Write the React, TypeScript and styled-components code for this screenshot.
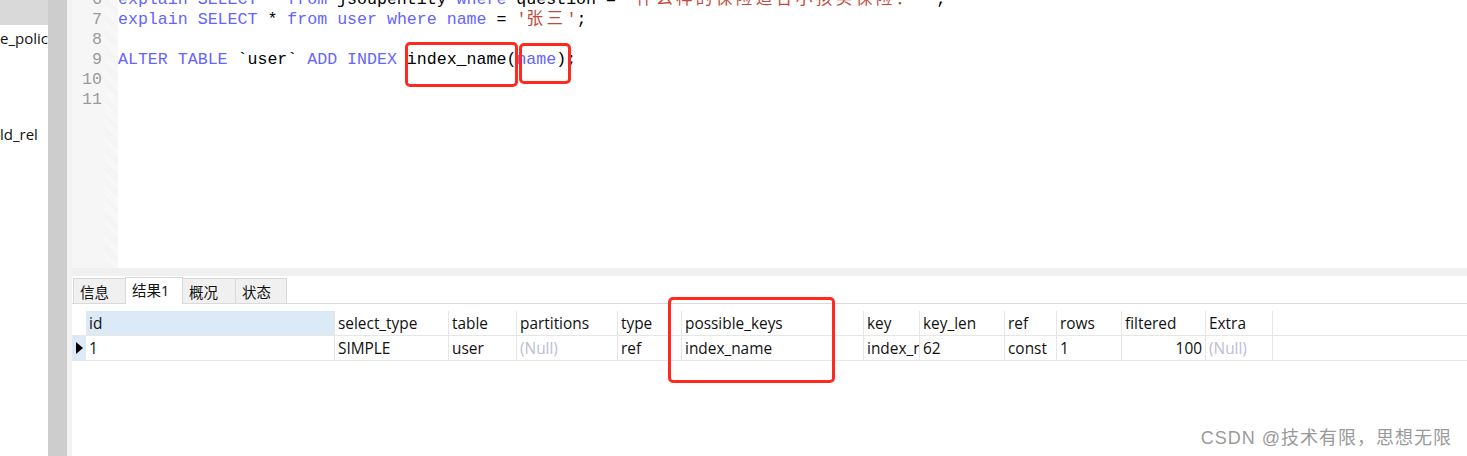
import React from "react";
import styled, { createGlobalStyle } from "styled-components";

const Global = createGlobalStyle`
  html, body { margin: 0; padding: 0; background: #ffffff; }
  body { width: 1467px; height: 456px; overflow: hidden; }
`;

const uiFont = `"Open Sans", "Noto Sans CJK SC", sans-serif`;
const monoFont = `"Liberation Mono", "Noto Sans CJK SC", monospace`;

const Screen = styled.div`
  position: relative;
  width: 1467px;
  height: 456px;
  display: flex;
  overflow: hidden;
  background: #fff;
  font-family: ${uiFont};
`;

const LeftPanel = styled.div`
  width: 48px;
  flex: none;
  display: flex;
  flex-direction: column;
  overflow: hidden;
  background: #fff;
`;

const TreeItem = styled.div<{ $selected?: boolean; $gap?: number }>`
  height: ${(p) => (p.$selected ? 25 : 24)}px;
  margin-top: ${(p) => p.$gap ?? 0}px;
  background: ${(p) => (p.$selected ? "#d9d9d9" : "transparent")};
  font-size: 15px;
  line-height: 26px;
  color: #111;
  white-space: nowrap;
  overflow: hidden;
`;

const ScrollStrip = styled.div`
  width: 19px;
  flex: none;
  background: #cdcdcd;
`;

const Edge = styled.div`
  width: 5px;
  flex: none;
  background: #f3f3f3;
`;

const Main = styled.div`
  flex: 1;
  display: flex;
  flex-direction: column;
  min-width: 0;
`;

const Editor = styled.div`
  height: 268px;
  flex: none;
  display: flex;
  overflow: hidden;
  background: #fff;
`;

const Gutter = styled.div`
  width: 30px;
  padding-right: 3px;
  flex: none;
  background: #f6f6f6;
  display: flex;
  flex-direction: column;
  align-items: flex-end;
  padding-top: 0;
  margin-top: -10px;
`;

const FoldMargin = styled.div`
  width: 13px;
  flex: none;
  background-color: #f8f8f8;
  background-image: repeating-linear-gradient(
    45deg,
    #f2f2f2 0px,
    #f2f2f2 1px,
    #fafafa 1px,
    #fafafa 2px
  );
`;

const LineNo = styled.div`
  height: 20px;
  font-family: ${monoFont};
  font-size: 16.6px;
  line-height: 20px;
  color: #9a9a9a;
`;

const Code = styled.div`
  flex: 1;
  margin-top: -10px;
  display: flex;
  flex-direction: column;
`;

const CodeLine = styled.div`
  height: 20px;
  font-family: ${monoFont};
  font-size: 16.6px;
  line-height: 20px;
  white-space: pre;
  color: #000;
`;

const Kw = styled.span`
  color: #6464ff;
`;
const Str = styled.span`
  color: #c04a3c;
`;
const Cjk = styled.span`
  letter-spacing: 3.4px;
`;

const Splitter = styled.div`
  height: 8px;
  flex: none;
  background: #f0f0f0;
`;

const TabBar = styled.div`
  height: 27px;
  flex: none;
  display: flex;
  align-items: flex-end;
  padding-left: 2px;
  border-bottom: 1px solid #dadada;
  background: #fff;
`;

const Tab = styled.div<{ $active?: boolean; $w: number }>`
  width: ${(p) => p.$w}px;
  height: ${(p) => (p.$active ? 27 : 25)}px;
  box-sizing: border-box;
  border: 1px solid #d8d8d8;
  border-bottom: none;
  margin-left: -1px;
  margin-bottom: ${(p) => (p.$active ? -1 : 0)}px;
  background: ${(p) => (p.$active ? "#fff" : "#f0f0f0")};
  font-size: 14.5px;
  line-height: ${(p) => (p.$active ? 25 : 27)}px;
  padding-left: 6px;
  color: #111;
  position: relative;
  z-index: ${(p) => (p.$active ? 1 : 0)};
`;

const Grid = styled.div`
  margin-top: 7px;
  display: flex;
  flex-direction: column;
`;

const Row = styled.div`
  display: flex;
  height: 25px;
  box-sizing: border-box;
  border-bottom: 1px solid #e6e6e6;
`;

const Indicator = styled.div<{ $current?: boolean }>`
  width: 14px;
  flex: none;
  box-sizing: border-box;
  background: ${(p) => (p.$current ? "#dce9f7" : "#fff")};
  display: flex;
  align-items: center;
  justify-content: center;
`;

const Cell = styled.div<{ $w: number; $hl?: boolean; $right?: boolean; $null?: boolean }>`
  width: ${(p) => p.$w}px;
  flex: none;
  box-sizing: border-box;
  border-right: 1px solid #e6e6e6;
  background: ${(p) => (p.$hl ? "#dce9f7" : "#fff")};
  padding: 0 3px;
  font-size: 15.4px;
  line-height: 25px;
  color: ${(p) => (p.$null ? "#b8c0d4" : "#111")};
  text-align: ${(p) => (p.$right ? "right" : "left")};
  white-space: nowrap;
  overflow: hidden;
`;

const Mark = styled.div<{ $x: number; $y: number; $w: number; $h: number }>`
  position: absolute;
  left: ${(p) => p.$x}px;
  top: ${(p) => p.$y}px;
  width: ${(p) => p.$w}px;
  height: ${(p) => p.$h}px;
  box-sizing: border-box;
  border: 3px solid #ff2a1f;
  border-radius: 5px;
  pointer-events: none;
`;

const Watermark = styled.div`
  position: absolute;
  right: 15px;
  bottom: 7px;
  font-family: "Liberation Sans", "Noto Sans CJK SC", sans-serif;
  font-size: 18px;
  color: #9a9a9a;
  letter-spacing: 1px;
`;

const columns: { name: string; w: number }[] = [
  { name: "id", w: 249 },
  { name: "select_type", w: 114 },
  { name: "table", w: 68 },
  { name: "partitions", w: 101 },
  { name: "type", w: 64 },
  { name: "possible_keys", w: 182 },
  { name: "key", w: 56 },
  { name: "key_len", w: 85 },
  { name: "ref", w: 52 },
  { name: "rows", w: 65 },
  { name: "filtered", w: 84 },
  { name: "Extra", w: 67 },
];

const data: { v: string; nul?: boolean; right?: boolean }[] = [
  { v: "1" },
  { v: "SIMPLE" },
  { v: "user" },
  { v: "(Null)", nul: true },
  { v: "ref" },
  { v: "index_name" },
  { v: "index_name" },
  { v: "62" },
  { v: "const" },
  { v: "1" },
  { v: "100", right: true },
  { v: "(Null)", nul: true },
];

export default function App() {
  return (
    <>
      <Global />
      <Screen>
        <LeftPanel>
          <TreeItem $selected />
          <TreeItem>e_policy</TreeItem>
          <TreeItem $gap={72}>ld_rel</TreeItem>
        </LeftPanel>
        <ScrollStrip />
        <Edge />
        <Main>
          <Editor>
            <Gutter>
              {[6, 7, 8, 9, 10, 11].map((n) => (
                <LineNo key={n}>{n}</LineNo>
              ))}
            </Gutter>
            <FoldMargin />
            <Code>
              <CodeLine>
                <Kw>explain</Kw> <Kw>SELECT</Kw> * <Kw>from</Kw> jsoupentity <Kw>where</Kw> question ={" "}
                <Str>
                  '<Cjk>什么样的保险适合小孩买保险：</Cjk>'
                </Str>{" "}
                ;
              </CodeLine>
              <CodeLine>
                <Kw>explain</Kw> <Kw>SELECT</Kw> * <Kw>from</Kw> <Kw>user</Kw> <Kw>where</Kw> <Kw>name</Kw> ={" "}
                <Str>
                  '<Cjk>张三</Cjk>'
                </Str>
                ;
              </CodeLine>
              <CodeLine> </CodeLine>
              <CodeLine>
                <Kw>ALTER</Kw> <Kw>TABLE</Kw> `user` <Kw>ADD</Kw> <Kw>INDEX</Kw> index_name(<Kw>name</Kw>);
              </CodeLine>
              <CodeLine> </CodeLine>
              <CodeLine> </CodeLine>
            </Code>
          </Editor>
          <Splitter />
          <TabBar>
            <Tab $w={53}>信息</Tab>
            <Tab $w={58} $active>结果1</Tab>
            <Tab $w={54}>概况</Tab>
            <Tab $w={52}>状态</Tab>
          </TabBar>
          <Grid>
            <Row>
              <Indicator />
              {columns.map((c, i) => (
                <Cell key={c.name} $w={c.w} $hl={i === 0}>
                  {c.name}
                </Cell>
              ))}
            </Row>
            <Row>
              <Indicator $current>
                <svg width="7" height="12" viewBox="0 0 7 12">
                  <path d="M0 0 L7 6 L0 12 Z" fill="#000" />
                </svg>
              </Indicator>
              {data.map((d, i) => (
                <Cell key={i} $w={columns[i].w} $null={d.nul} $right={d.right}>
                  {d.v}
                </Cell>
              ))}
            </Row>
          </Grid>
        </Main>
        <Mark $x={405} $y={42} $w={113} $h={45} />
        <Mark $x={519} $y={43} $w={52} $h={41} />
        <Mark $x={668} $y={297} $w={167} $h={86} />
        <Watermark>CSDN @技术有限，思想无限</Watermark>
      </Screen>
    </>
  );
}
